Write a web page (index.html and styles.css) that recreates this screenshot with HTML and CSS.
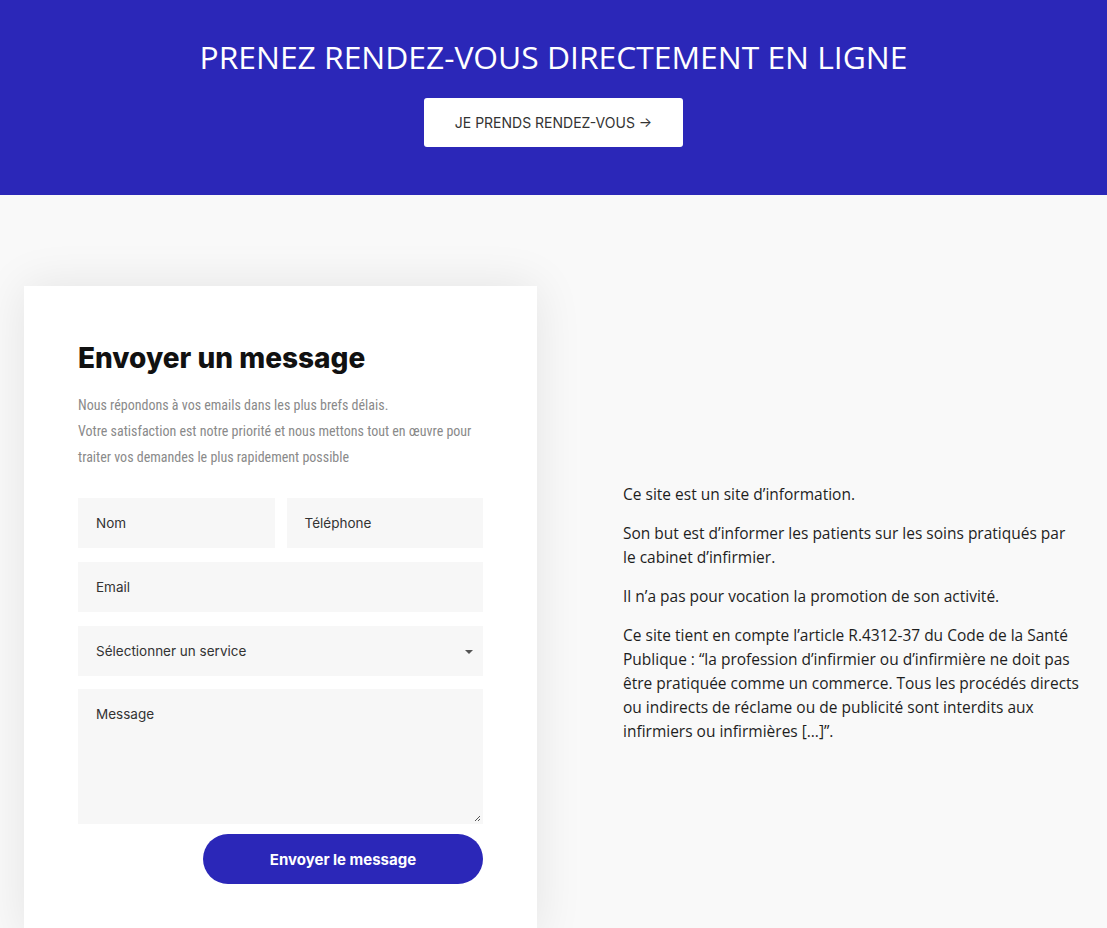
FILE: index.html
```html
<!DOCTYPE html>
<html lang="fr">
<head>
<meta charset="utf-8">
<title>Contact</title>
<link rel="stylesheet" href="styles.css">
</head>
<body>
<section class="banner">
  <h2 class="banner-title">PRENEZ RENDEZ-VOUS DIRECTEMENT EN LIGNE</h2>
  <a class="banner-btn" href="#">JE PRENDS RENDEZ-VOUS →</a>
</section>
<section class="contact">
  <div class="card">
    <h3 class="card-title">Envoyer un message</h3>
    <p class="card-desc">Nous répondons à vos emails dans les plus brefs délais.<br>Votre satisfaction est notre priorité et nous mettons tout en œuvre pour traiter vos demandes le plus rapidement possible</p>
    <form class="form">
      <div class="row two">
        <div class="field">Nom</div>
        <div class="field">Téléphone</div>
      </div>
      <div class="field">Email</div>
      <div class="field select">Sélectionner un service<span class="caret"></span></div>
      <div class="field textarea">Message
        <svg class="grip" width="7" height="7" viewBox="0 0 7 7"><path d="M6 1L1 6M6 4L4 6" stroke="#555" stroke-width="1"/></svg>
      </div>
      <div class="actions"><button type="button" class="send">Envoyer le message</button></div>
    </form>
  </div>
  <div class="info">
    <p>Ce site est un site d’information.</p>
    <p>Son but est d’informer les patients sur les soins pratiqués par le cabinet d’infirmier.</p>
    <p>Il n’a pas pour vocation la promotion de son activité.</p>
    <p>Ce site tient en compte l’article R.4312-37 du Code de la Santé Publique : “la profession d’infirmier ou d’infirmière ne doit pas être pratiquée comme un commerce. Tous les procédés directs ou indirects de réclame ou de publicité sont interdits aux infirmiers ou infirmières […]”.</p>
  </div>
</section>
</body>
</html>
```

FILE: styles.css
```css
html, body { margin: 0; padding: 0; }
body { background: #f9f9f9; font-family: "Open Sans", sans-serif; overflow: hidden; }

.banner {
  background: #2b27b8;
  height: 195px;
  box-sizing: border-box;
  padding-top: 36px;
  display: flex;
  flex-direction: column;
  align-items: center;
}
.banner-title {
  margin: 0;
  color: #fff;
  font-family: "Open Sans", sans-serif;
  font-weight: 400;
  font-size: 31.8px;
  line-height: 42px;
  letter-spacing: 0;
}
.banner-btn {
  margin-top: 20px;
  width: 259px;
  height: 49px;
  background: #fff;
  border-radius: 3px;
  display: flex;
  align-items: center;
  justify-content: center;
  font-family: Inter, sans-serif;
  font-size: 14px;
  color: #333;
  text-decoration: none;
}

.contact {
  display: flex;
  align-items: center;
  padding: 91px 0 0 24px;
}
.card {
  width: 513px;
  box-sizing: border-box;
  background: #fff;
  padding: 54px 54px 54px 54px;
  box-shadow: 0 0 45px rgba(0,0,0,0.09);
  flex: none;
}
.card-title {
  margin: 0;
  font-family: Inter, sans-serif;
  font-weight: 800;
  font-size: 28px;
  line-height: 36px;
  color: #111;
  letter-spacing: 0;
}
.card-desc {
  margin: 16px 0 28px;
  font-family: "Roboto Condensed", "Liberation Sans Narrow", Roboto, sans-serif;
  font-stretch: condensed;
  font-size: 14px;
  line-height: 26px;
  color: #8a8a8a;
}
.form { display: flex; flex-direction: column; gap: 14px; }
.row.two { display: grid; grid-template-columns: 1fr 1fr; gap: 12px; }
.field {
  background: #f7f7f7;
  height: 50px;
  box-sizing: border-box;
  padding: 0 18px;
  display: flex;
  align-items: center;
  font-family: Inter, sans-serif;
  font-size: 13.5px;
  color: #333;
  position: relative;
}
.select .caret {
  position: absolute;
  right: 10px;
  top: 24px;
  border-left: 4px solid transparent;
  border-right: 4px solid transparent;
  border-top: 4px solid #555;
}
.textarea {
  height: 135px;
  align-items: flex-start;
  padding-top: 17px;
  margin-top: -1px;
}
.grip { position: absolute; right: 2px; bottom: 2px; }
.actions { display: flex; justify-content: flex-end; margin-top: -4px; }
.send {
  width: 280px;
  height: 50px;
  border: 0;
  border-radius: 25px;
  background: #2b27b8;
  color: #fff;
  font-family: Inter, sans-serif;
  font-weight: 700;
  font-size: 15px;
  cursor: pointer;
}

.info {
  margin-left: 86px;
  width: 457px;
  font-family: "Open Sans", sans-serif;
  font-size: 15.5px;
  line-height: 24px;
  color: #1e1e1e;
}
.info p { margin: 0 0 15px; }
.info p:last-child { margin-bottom: 0; }
```
